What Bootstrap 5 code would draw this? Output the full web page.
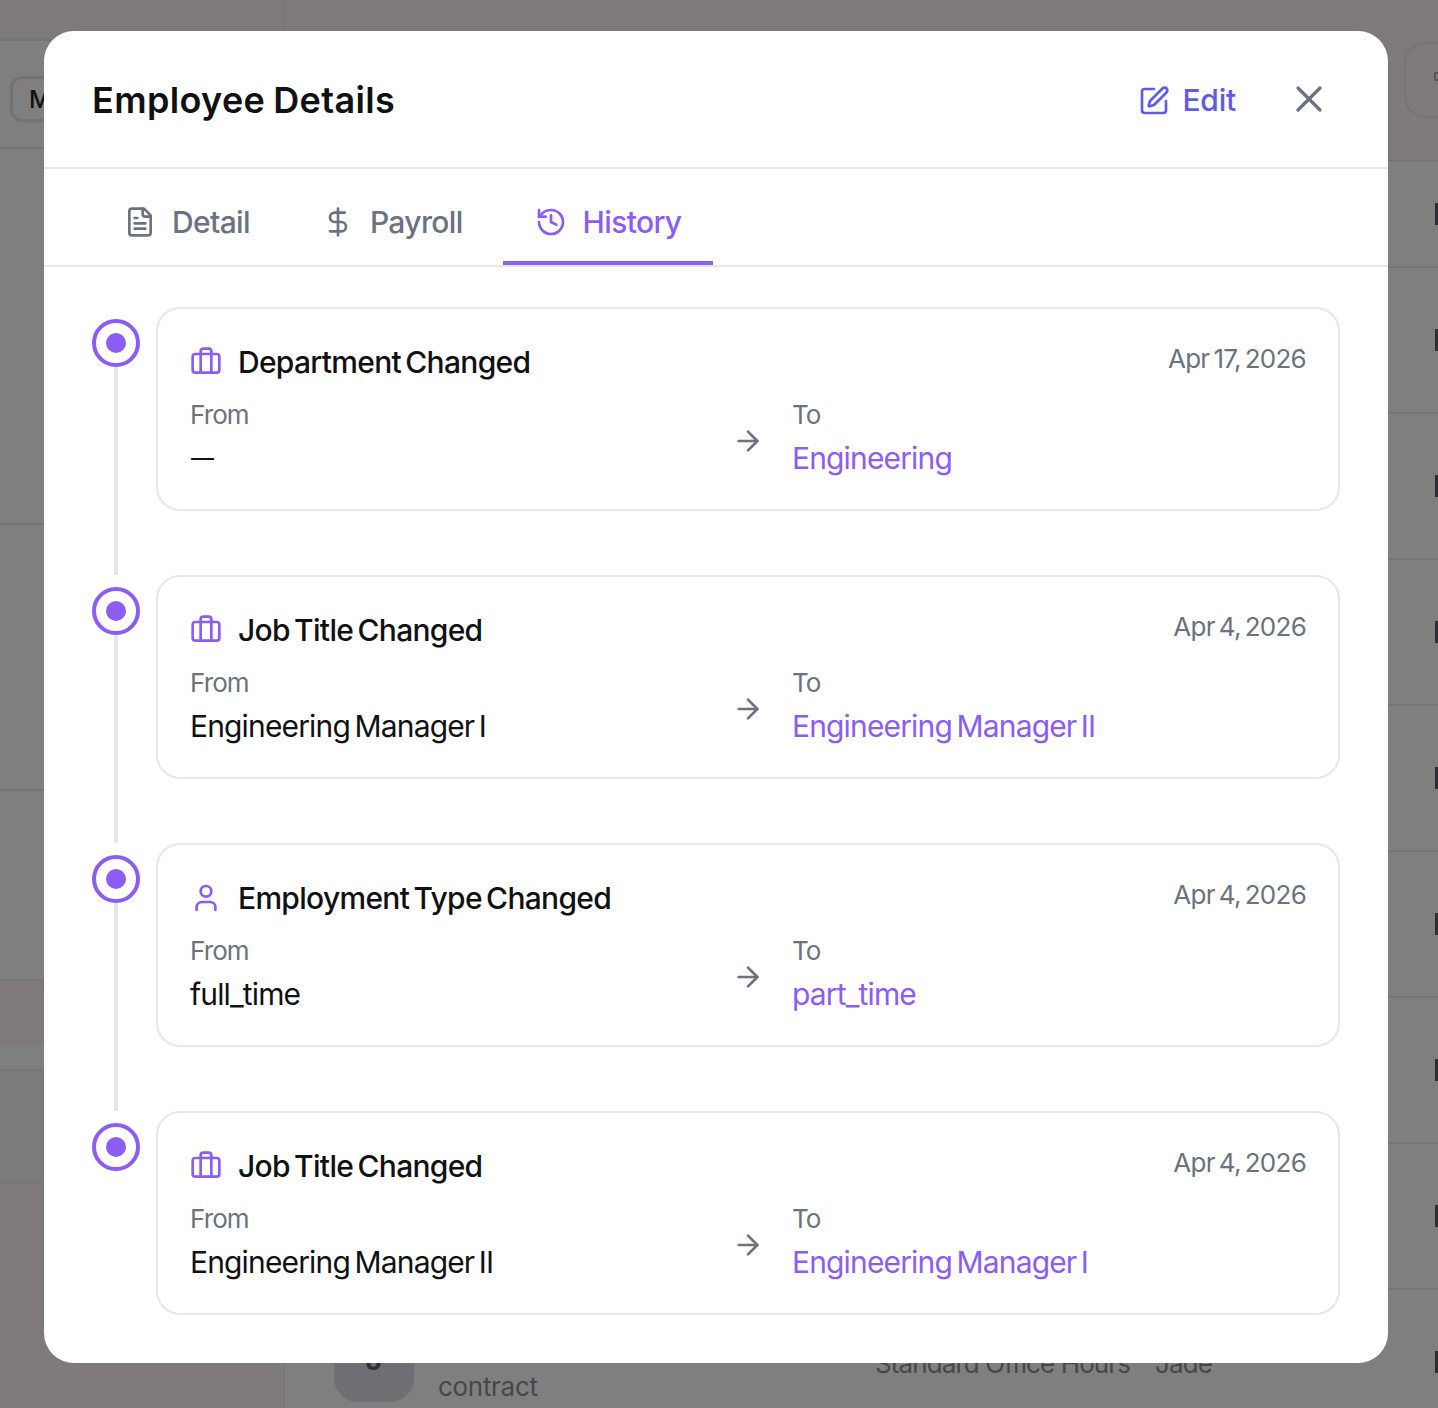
<!DOCTYPE html>
<html lang="en">
<head>
    <meta charset="UTF-8">
    <meta name="viewport" content="width=device-width, initial-scale=1.0">
    <title>Employee Details</title>
    <link href="https://cdn.jsdelivr.net/npm/bootstrap@5.3.0/dist/css/bootstrap.min.css" rel="stylesheet">
    <style>
        html, body { height: 1408px; }
        body { position: relative; overflow: hidden; background: #7f7f7f; font-family: Inter, "Liberation Sans", sans-serif; color: #111114; }

        /* page behind the dialog */
        .bg-side { width: 285px; height: 1408px; border-right: 2px solid #767878; flex-shrink: 0; }
        .bg-side > div { border-bottom: 2px solid #757575; }
        .bg-s1 { height: 41px; background: #7f7a7a; }
        .bg-s2 { height: 108px; padding: 35px 0 0 10px; }
        .bg-s3 { height: 376px; }
        .bg-s4 { height: 266px; }
        .bg-s5 { height: 190px; }
        .bg-s6 { height: 64px; background: #7f7979; border-bottom: 0 !important; }
        .bg-s7 { height: 26px; }
        .bg-s8 { height: 112px; background: #7a7c7c; }
        .bg-s9 { height: 225px; background: #7f7a7a; border-bottom: 0 !important; }
        .bg-pill { width: 80px; height: 46px; border: 3px solid #737373; border-radius: 12px; font-size: 24px; font-weight: 500; padding: 3px 0 0 16px; color: #111; }
        .bg-top { height: 162px; background: #7f7a7a; border-bottom: 2px solid #767676; padding-top: 42px; }
        .bg-topbtn { width: 34px; height: 76px; margin-left: auto; border: 2px solid #757577; border-right: 0; border-radius: 22px 0 0 22px; padding: 28px 0 0 28px; }
        .bg-topmark { width: 4px; height: 9px; border: 2px solid #55555a; border-right: 0; border-radius: 2px 0 0 2px; }
        .bg-row { height: 146px; border-bottom: 2px solid #767676; }
        .bg-headrow { height: 106px; }
        .bg-tick { width: 3px; height: 22px; background: #2d2d33; }
        .bg-avatar { width: 80px; height: 80px; margin-left: 49px; padding-bottom: 6px; border-radius: 24px; background: #6f6f73; color: #2f2d3a; font-size: 30px; font-weight: 600; }
        .bg-name { width: 437px; margin-left: 24px; padding-top: 48px; color: #47474b; font-size: 26px; letter-spacing: -.3px; }
        .bg-cell { font-size: 26px; color: #47474b; margin-top: 2px; letter-spacing: -.9px; }
        .bg-cell-a { width: 280px; }

        /* dialog */
        .detail-modal { position: absolute; left: 44px; top: 31px; width: 1344px; border: 0; border-radius: 30px; background: #fff; }
        .detail-head { height: 138px; padding: 3px 48px 0; border-bottom: 2px solid #e5e7eb; }
        .detail-title { font-size: 36px; font-weight: 600; letter-spacing: .35px; word-spacing: -1.5px; color: #111114; }
        .edit-link { color: #5f5be3; font-size: 30px; font-weight: 500; gap: 12px; margin-right: 51px; border: 0; background: none; padding: 0; letter-spacing: -.2px; }
        .close-x { border: 0; background: none; padding: 0; color: #6b7280; line-height: 0; margin: 0 9px 3px 0; }

        .tab-bar { height: 98px; padding: 0 48px; border-bottom: 2px solid #e5e7eb; gap: 8px; align-items: stretch; }
        .tab-bar .nav-link { display: flex; align-items: center; gap: 16px; padding: 14px 32px 0; color: #6b7280; font-size: 30px; font-weight: 500; border-bottom: 4px solid transparent; border-radius: 0; letter-spacing: -.65px; }
        .tab-bar .nav-link.active { color: #8b5cf6; border-bottom-color: #8b5cf6; }

        .detail-body { padding: 40px 48px 48px; }
        .tl-item { gap: 16px; }
        .tl-rail { width: 48px; padding-top: 12px; flex-shrink: 0; }
        .tl-dot { width: 48px; height: 48px; border: 4px solid #8b5cf6; border-radius: 50%; flex-shrink: 0; }
        .tl-dot::after { content: ""; width: 20px; height: 20px; border-radius: 50%; background: #8b5cf6; }
        .tl-line { width: 4px; flex-grow: 1; background: #e5e7eb; }
        .tl-main { padding-bottom: 64px; }
        .tl-item:last-child .tl-main { padding-bottom: 0; }
        .change-card { height: 204px; padding: 32px; border: 2px solid #e5e7eb; border-radius: 24px; }
        .change-title { font-size: 30px; font-weight: 500; line-height: 40px; letter-spacing: -.7px; word-spacing: -3px; margin-top: 1px; color: #111114; }
        .change-title svg { margin-right: 16px; }
        .change-date { font-size: 26px; line-height: 36px; color: #6b7280; letter-spacing: -.75px; word-spacing: -2.5px; }
        .change-grid { display: grid; grid-template-columns: 1fr 32px 1fr; column-gap: 28px; align-items: center; margin-top: 15px; }
        .change-label { font-size: 26px; line-height: 36px; color: #6b7280; letter-spacing: -.9px; }
        .change-value { font-size: 30px; height: 44px; line-height: 44px; margin-top: 3px; letter-spacing: -.85px; word-spacing: -3px; }
        .change-value.to { color: #8b5cf6; }
        .change-value.empty-val { font-size: 23px; letter-spacing: 0; padding-left: 1px; }
        .arrow-ic { color: #6b7280; margin-top: 4px; }
        .violet-ic { color: #8b5cf6; flex-shrink: 0; }
        svg { display: block; }
    </style>
</head>
<body>
    <!-- page behind the dialog -->
    <div class="d-flex">
        <div class="bg-side">
            <div class="bg-s1"></div>
            <div class="bg-s2"><div class="bg-pill">M</div></div>
            <div class="bg-s3"></div>
            <div class="bg-s4"></div>
            <div class="bg-s5"></div>
            <div class="bg-s6"></div>
            <div class="bg-s7"></div>
            <div class="bg-s8"></div>
            <div class="bg-s9"></div>
        </div>
        <div class="flex-grow-1">
            <div class="bg-top"><div class="bg-topbtn"><div class="bg-topmark"></div></div></div>
            <div class="bg-row bg-headrow d-flex align-items-center justify-content-end"><div class="bg-tick"></div></div>
            <div class="bg-row d-flex align-items-center justify-content-end"><div class="bg-tick"></div></div>
            <div class="bg-row d-flex align-items-center justify-content-end"><div class="bg-tick"></div></div>
            <div class="bg-row d-flex align-items-center justify-content-end"><div class="bg-tick"></div></div>
            <div class="bg-row d-flex align-items-center justify-content-end"><div class="bg-tick"></div></div>
            <div class="bg-row d-flex align-items-center justify-content-end"><div class="bg-tick"></div></div>
            <div class="bg-row d-flex align-items-center justify-content-end"><div class="bg-tick"></div></div>
            <div class="bg-row d-flex align-items-center justify-content-end"><div class="bg-tick"></div></div>
            <div class="bg-row d-flex align-items-center">
                <div class="bg-avatar d-flex align-items-center justify-content-center">J</div>
                <div class="bg-name">contract</div>
                <div class="bg-cell bg-cell-a">Standard Office Hours</div>
                <div class="bg-cell flex-grow-1">Jade</div>
                <div class="bg-tick"></div>
            </div>
        </div>
    </div>

    <div class="detail-modal modal-content">
        <div class="detail-head d-flex align-items-center justify-content-between">
            <h2 class="detail-title mb-0">Employee Details</h2>
            <div class="d-flex align-items-center">
                <button class="edit-link d-flex align-items-center" type="button">
                    <svg width="32" height="32" viewBox="0 0 24 24" fill="none" stroke="currentColor" stroke-width="2" stroke-linecap="round" stroke-linejoin="round"><path d="M12 3H5a2 2 0 0 0-2 2v14a2 2 0 0 0 2 2h14a2 2 0 0 0 2-2v-7"/><path d="M18.375 2.625a1 1 0 0 1 3 3l-9.013 9.014a2 2 0 0 1-.853.505l-2.873.84a.5.5 0 0 1-.62-.62l.84-2.873a2 2 0 0 1 .506-.852z"/></svg>
                    Edit
                </button>
                <button class="close-x" type="button" aria-label="Close">
                    <svg width="44" height="44" viewBox="0 0 24 24" fill="none" stroke="currentColor" stroke-width="1.8" stroke-linecap="round" stroke-linejoin="round"><path d="M18 6 6 18"/><path d="m6 6 12 12"/></svg>
                </button>
            </div>
        </div>

        <nav class="nav tab-bar">
            <a class="nav-link" href="#">
                <svg width="32" height="32" viewBox="0 0 24 24" fill="none" stroke="currentColor" stroke-width="2" stroke-linecap="round" stroke-linejoin="round"><path d="M15 2H6a2 2 0 0 0-2 2v16a2 2 0 0 0 2 2h12a2 2 0 0 0 2-2V7Z"/><path d="M14 2v4a2 2 0 0 0 2 2h4"/><path d="M10 9H8"/><path d="M16 13H8"/><path d="M16 17H8"/></svg>
                Detail
            </a>
            <a class="nav-link" href="#">
                <svg width="32" height="32" viewBox="0 0 24 24" fill="none" stroke="currentColor" stroke-width="2" stroke-linecap="round" stroke-linejoin="round"><path d="M12 2v20"/><path d="M17 5H9.5a3.5 3.5 0 0 0 0 7h5a3.5 3.5 0 0 1 0 7H6"/></svg>
                Payroll
            </a>
            <a class="nav-link active" href="#">
                <svg width="32" height="32" viewBox="0 0 24 24" fill="none" stroke="currentColor" stroke-width="2" stroke-linecap="round" stroke-linejoin="round"><path d="M3 12a9 9 0 1 0 9-9 9.75 9.75 0 0 0-6.74 2.74L3 8"/><path d="M3 3v5h5"/><path d="M12 7v5l4 2"/></svg>
                History
            </a>
        </nav>

        <div class="detail-body" id="timeline"></div>
    </div>

    <script src="https://cdn.jsdelivr.net/npm/bootstrap@5.3.0/dist/js/bootstrap.bundle.min.js"></script>
    <script>
        const iconBag = '<rect x="2" y="6" width="20" height="14" rx="2"/><path d="M16 20V4a2 2 0 0 0-2-2h-4a2 2 0 0 0-2 2v16"/>';
        const iconUser = '<path d="M19 21v-2a4 4 0 0 0-4-4H9a4 4 0 0 0-4 4v2"/><circle cx="12" cy="7" r="4"/>';

        const changes = [
            { icon: iconBag, title: "Department Changed", date: "Apr 17, 2026", from: "—", to: "Engineering" },
            { icon: iconBag, title: "Job Title Changed", date: "Apr 4, 2026", from: "Engineering Manager I", to: "Engineering Manager II" },
            { icon: iconUser, title: "Employment Type Changed", date: "Apr 4, 2026", from: "full_time", to: "part_time" },
            { icon: iconBag, title: "Job Title Changed", date: "Apr 4, 2026", from: "Engineering Manager II", to: "Engineering Manager I" }
        ];

        document.getElementById("timeline").innerHTML = changes.map((c, i) => `
            <div class="tl-item d-flex">
                <div class="tl-rail d-flex flex-column align-items-center">
                    <div class="tl-dot d-flex align-items-center justify-content-center"></div>
                    ${i < changes.length - 1 ? '<div class="tl-line"></div>' : ''}
                </div>
                <div class="tl-main flex-grow-1">
                    <div class="change-card">
                        <div class="d-flex justify-content-between">
                            <div class="change-title d-flex align-items-center">
                                <svg class="violet-ic" width="32" height="32" viewBox="0 0 24 24" fill="none" stroke="currentColor" stroke-width="2" stroke-linecap="round" stroke-linejoin="round">${c.icon}</svg>
                                <span>${c.title}</span>
                            </div>
                            <div class="change-date">${c.date}</div>
                        </div>
                        <div class="change-grid">
                            <div>
                                <div class="change-label">From</div>
                                <div class="change-value ${c.from === "—" ? "empty-val" : ""}">${c.from}</div>
                            </div>
                            <svg class="arrow-ic" width="32" height="32" viewBox="0 0 24 24" fill="none" stroke="currentColor" stroke-width="2" stroke-linecap="round" stroke-linejoin="round"><path d="M5 12h14"/><path d="m12 5 7 7-7 7"/></svg>
                            <div>
                                <div class="change-label">To</div>
                                <div class="change-value to">${c.to}</div>
                            </div>
                        </div>
                    </div>
                </div>
            </div>`).join("");
    </script>
</body>
</html>
